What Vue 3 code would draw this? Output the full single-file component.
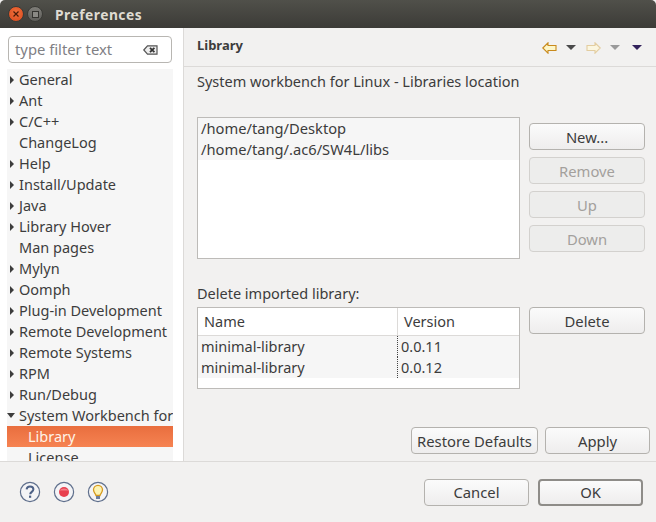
<script setup>
const items = [
  ['General', 1], ['Ant', 1], ['C/C++', 1], ['ChangeLog', 0], ['Help', 1], ['Install/Update', 1], ['Java', 1],
  ['Library Hover', 1], ['Man pages', 0], ['Mylyn', 1], ['Oomph', 1], ['Plug-in Development', 1],
  ['Remote Development', 1], ['Remote Systems', 1], ['RPM', 1], ['Run/Debug', 1]
]
const paths = ['/home/tang/Desktop', '/home/tang/.ac6/SW4L/libs']
const rows = [['minimal-library', '0.0.11'], ['minimal-library', '0.0.12']]
</script>

<template>
  <div class="win">
    <header class="titlebar">
      <span class="wbtn close"><svg width="8" height="8" viewBox="0 0 8 8"><path d="M1.5 1.5l5 5M6.5 1.5l-5 5" stroke="#4a1a08" stroke-width="1.2"/></svg></span>
      <span class="wbtn max"><span class="sq"></span></span>
      <span class="wtitle">Preferences</span>
    </header>
    <div class="main">
      <aside class="side">
        <div class="filter">
          <span class="ftext">type filter text</span>
          <svg width="15" height="10" viewBox="0 0 15 10"><path d="M0.8 5L4.5 0.8H14V9.2H4.5Z" fill="#eee" stroke="#555" stroke-width="1.2"/><path d="M7 2.8l4.4 4.4M11.4 2.8L7 7.2" stroke="#333" stroke-width="1.8"/></svg>
        </div>
        <div class="tree">
          <div v-for="it in items" :key="it[0]" class="node">
            <span v-if="it[1]" class="tri"></span><span v-else class="tri none"></span>{{ it[0] }}
          </div>
          <div class="node"><span class="tri open"></span>System Workbench for</div>
          <div class="node child sel">Library</div>
          <div class="node child">License</div>
        </div>
      </aside>
      <section class="content">
        <div class="phead">
          <strong>Library</strong>
          <div class="nav">
            <svg width="15" height="12" viewBox="0 0 15 12"><path d="M0.8 6L6 0.8V3.500H14V8.500H6V11.200Z" fill="#fdf6c8" stroke="#c98a1c" stroke-width="1.100"/></svg>
            <span class="drop d1"></span>
            <svg class="fwd" width="15" height="12" viewBox="0 0 15 12"><path d="M14.200 6L9 0.8V3.500H1V8.500H9V11.200Z" fill="#fbf6e0" stroke="#e3cda0" stroke-width="1.100"/></svg>
            <span class="drop d2"></span>
            <span class="drop d3"></span>
          </div>
        </div>
        <div class="body">
          <p class="desc">System workbench for Linux - Libraries location</p>
          <div class="r1">
            <div class="listbox">
              <div v-for="p in paths" :key="p" class="lrow">{{ p }}</div>
            </div>
            <div class="btns">
              <button class="btn">New...</button>
              <button class="btn off">Remove</button>
              <button class="btn off">Up</button>
              <button class="btn off">Down</button>
            </div>
          </div>
          <p class="lbl2">Delete imported library:</p>
          <div class="r2">
            <div class="table">
              <div class="thead"><span class="c1">Name</span><span class="c2">Version</span></div>
              <div v-for="(r, i) in rows" :key="i" class="trow"><span class="t1">{{ r[0] }}</span><span class="t2">{{ r[1] }}</span></div>
            </div>
            <div class="btns top"><button class="btn">Delete</button></div>
          </div>
          <div class="actions">
            <button class="btn restore">Restore Defaults</button>
            <button class="btn apply">Apply</button>
          </div>
        </div>
      </section>
    </div>
    <footer class="foot">
      <div class="ficons">
        <svg width="22" height="22" viewBox="0 0 22 22"><circle cx="11" cy="11" r="9.6" fill="#f4f4f6" stroke="#5f6f8c" stroke-width="1.2"/><path d="M7.6 8.400C7.8 6.400 9.300 5.400 11 5.400c2 0 3.400 1.200 3.400 2.900 0 2.500-3.200 2.600-3.200 5" fill="none" stroke="#4d6186" stroke-width="2"/><rect x="10" y="14.600" width="2.200" height="2.200" fill="#4d6186"/></svg>
        <svg width="22" height="22" viewBox="0 0 22 22"><circle cx="11" cy="11" r="9.6" fill="#f4f4f6" stroke="#5f6f8c" stroke-width="1.2"/><circle cx="11" cy="11" r="5" fill="#e8404f"/><path d="M6.600 9.500a5 4 0 0 1 8.800 0z" fill="#f47c86"/></svg>
        <svg width="22" height="22" viewBox="0 0 22 22"><circle cx="11" cy="11" r="9.6" fill="#f4f4f6" stroke="#5f6f8c" stroke-width="1.2"/><path d="M9 14.500C8.600 12.500 6.500 11.500 6.500 8.800a4.500 4.500 0 0 1 9 0c0 2.700-2.100 3.700-2.500 5.700z" fill="#fdf4b4" stroke="#d69a1e" stroke-width="1.300"/><rect x="9" y="15" width="4" height="3" fill="#6f7f9c"/></svg>
      </div>
      <div class="fbtns">
        <button class="btn cancel">Cancel</button>
        <button class="btn ok">OK</button>
      </div>
    </footer>
  </div>
</template>

<style>
html, body { margin: 0; padding: 0; background: #f2f1f0; }
</style>

<style scoped>
.win {
  width: 656px; height: 522px; display: flex; flex-direction: column; overflow: hidden;
  background: #f2f1f0; color: #3c3c3c;
  font-family: "Noto Sans", "Open Sans", sans-serif; font-size: 14.5px;
}
.titlebar {
  height: 28px; flex: none; display: flex; align-items: center; padding-left: 8px; box-sizing: border-box;
  background: linear-gradient(#50504a, #3c3b37); border-radius: 5px 5px 0 0;
}
.wbtn { width: 16px; height: 16px; border-radius: 50%; display: flex; align-items: center; justify-content: center; box-sizing: border-box; }
.close { background: radial-gradient(circle at 50% 40%, #f0703c, #d9481c); border: 1px solid #3a3a36; }
.max { margin-left: 3px; background: linear-gradient(#7e7d78, #5f5e5a); border: 1px solid #3a3a36; }
.sq { width: 7px; height: 7px; border: 1px solid #34332f; background: #8a8984; box-sizing: border-box; }
.wtitle { margin-left: 12px; color: #dfdbd2; font-weight: 700; font-size: 13.8px; letter-spacing: 0.5px; }
.main { height: 434px; flex: none; display: flex; border-bottom: 1px solid #dcdad8; box-sizing: border-box; }
.side { width: 184px; flex: none; box-sizing: border-box; background: #fff; border-right: 1px solid #dcdad8; padding: 8px 10px 0 7px; overflow: hidden; display: flex; flex-direction: column; }
.filter {
  margin: 0 1px 0 1px; height: 27px; flex: none; box-sizing: border-box; border: 1px solid #b8b6b2; border-radius: 4px;
  display: flex; align-items: center; justify-content: space-between; padding: 0 13px 0 6px;
  color: #808084; font-size: 14.8px; background: #fff;
}
.ftext { margin-top: -2px; }
.tree { margin-top: 6px; flex: 1; background: #f6f6f6; overflow: hidden; min-height: 0; }
.node { height: 21px; line-height: 21px; white-space: nowrap; display: flex; align-items: center; font-size: 14.5px; color: #3d3d3d; overflow: hidden; }
.tri { width: 0; height: 0; border-left: 4px solid #3c3c3c; border-top: 4px solid transparent; border-bottom: 4px solid transparent; margin: 0 5px 0 3px; flex: none; }
.tri.none { border-color: transparent; }
.tri.open { border-left: 4px solid transparent; border-right: 4px solid transparent; border-top: 5px solid #3c3c3c; border-bottom: 0; margin: 0 4px 0 0; }
.child { padding-left: 21px; }
.sel { background: linear-gradient(#e96e3e, #f68352); color: #fff3e8; }
.content { flex: 1; min-width: 0; display: flex; flex-direction: column; }
.phead { height: 39px; flex: none; box-sizing: border-box; border-bottom: 1px solid #dcdad8; display: flex; align-items: center; justify-content: space-between; padding: 0 14px 4px 13px; }
.phead strong { font-size: 13px; font-weight: 700; color: #3c3c3c; }
.nav { display: flex; align-items: center; margin-top: 5px; }
.fwd { margin-left: 10px; }
.drop { width: 0; height: 0; border-left: 5px solid transparent; border-right: 5px solid transparent; border-top: 5px solid #4a4a4a; }
.d1 { margin-left: 9px; }
.d2 { margin-left: 9px; border-top-color: #9a9a9a; }
.d3 { margin-left: 12px; border-top-color: #33225c; }
.body { flex: 1; padding: 0 6px 0 13px; display: flex; flex-direction: column; min-height: 0; }
.desc { margin: 4px 0 0; height: 21px; line-height: 21px; font-size: 14.5px; white-space: nowrap; }
.r1 { display: flex; margin-top: 25px; }
.listbox { width: 323px; height: 142px; box-sizing: border-box; background: #fff; border: 1px solid #bdbbb8; }
.lrow { height: 21px; line-height: 21px; padding-left: 3px; background: #f6f6f6; font-size: 14.7px; white-space: nowrap; }
.btns { margin-left: 9px; width: 116px; display: flex; flex-direction: column; gap: 7px; padding-top: 6px; }
.btns.top { padding-top: 0; }
.btn {
  height: 27px; box-sizing: border-box; width: 100%; padding: 0; font: inherit; font-size: 14.8px; color: #3c3c3c;
  border: 1px solid #b4b2ae; border-radius: 4px; background: linear-gradient(#fbfbfb, #eeeded);
}
.btn.off { color: #a3a09c; background: #ededec; border-color: #d3d1ce; }
.lbl2 { margin: 24px 0 0; height: 21px; line-height: 21px; font-size: 14.5px; }
.r2 { display: flex; margin-top: 3px; }
.table { width: 323px; height: 82px; box-sizing: border-box; background: #fff; border: 1px solid #bdbbb8; }
.thead { height: 28px; display: flex; align-items: center; box-sizing: border-box; border-bottom: 1px solid #dcdad8; font-size: 14.5px; }
.c1 { width: 200px; padding-left: 6px; box-sizing: border-box; border-right: 1px solid #dcdad8; height: 100%; line-height: 27px; }
.c2 { padding-left: 6px; line-height: 27px; }
.trow { height: 21px; display: flex; background: #f6f6f6; line-height: 21px; font-size: 14.5px; }
.t1 { width: 200px; padding-left: 3px; box-sizing: border-box; border-right: 1px dotted #444; }
.t2 { padding-left: 3px; }
.actions { display: flex; justify-content: flex-end; gap: 7px; margin-top: 38px; }
.restore { width: 127px; }
.apply { width: 105px; }
.foot { flex: 1; display: flex; align-items: center; justify-content: space-between; padding: 0 13px 0 19px; }
.ficons { display: flex; gap: 12px; }
.fbtns { display: flex; gap: 9px; }
.cancel, .ok { width: 105px; }
.ok { border: 2px solid #8e8c88; }
</style>
